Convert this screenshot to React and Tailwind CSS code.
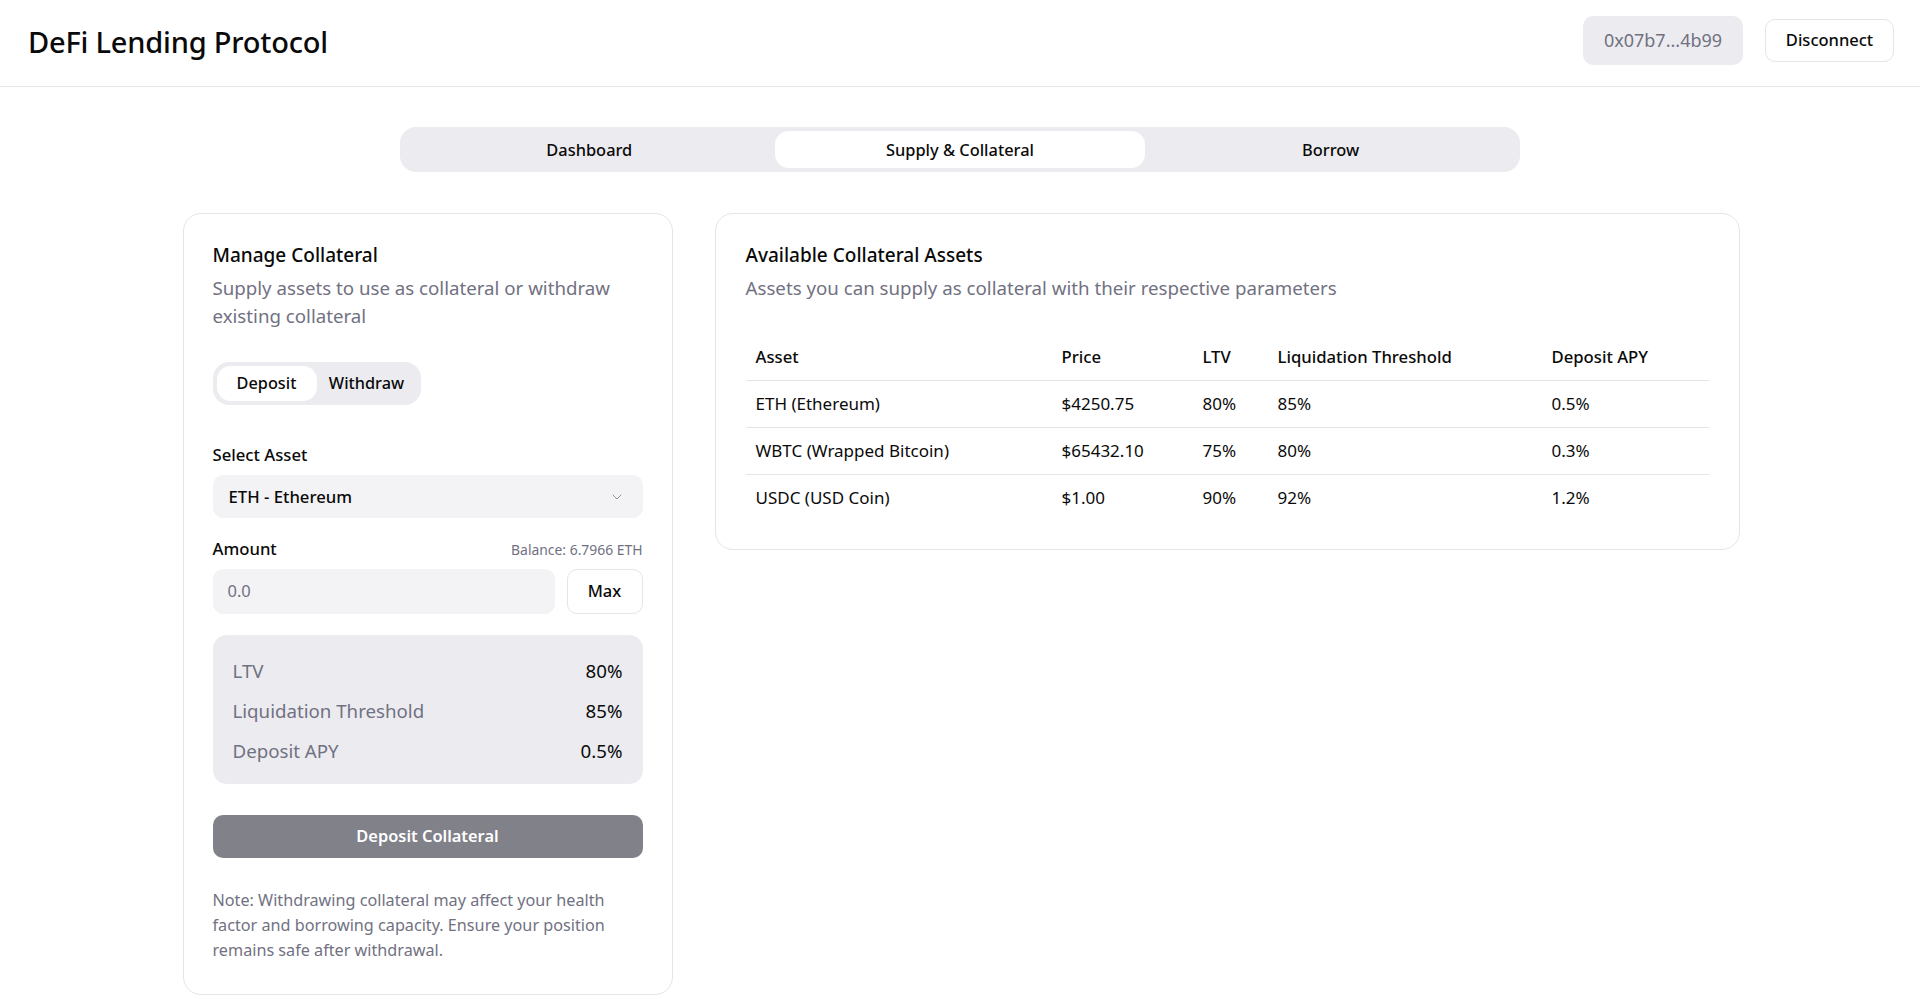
import { ChevronDown } from 'lucide-react'

const assets = [
  { name: 'ETH (Ethereum)', price: '$4250.75', ltv: '80%', lt: '85%', apy: '0.5%' },
  { name: 'WBTC (Wrapped Bitcoin)', price: '$65432.10', ltv: '75%', lt: '80%', apy: '0.3%' },
  { name: 'USDC (USD Coin)', price: '$1.00', ltv: '90%', lt: '92%', apy: '1.2%' },
]

const stats = [
  ['LTV', '80%'],
  ['Liquidation Threshold', '85%'],
  ['Deposit APY', '0.5%'],
]

export default function App() {
  return (
    <div className="min-h-screen bg-white font-['Noto_Sans',sans-serif] text-[#0a0a0a]">
      <header className="h-[87px] border-b border-[#e5e5e5] flex items-center justify-between pl-[28px] pr-[26px] pb-[3px]">
        <h1 className="text-[29px] font-medium tracking-[-0.2px]">DeFi Lending Protocol</h1>
        <div className="flex items-center gap-[22px] mb-[2px]">
          <div className="h-[49px] w-[160px] rounded-[10px] bg-[#ececf0] flex items-center justify-center text-[18px] text-[#717182]">0x07b7...4b99</div>
          <button className="h-[43px] w-[129px] rounded-[10px] border border-[#e5e5e5] bg-white text-[16.5px] font-medium">Disconnect</button>
        </div>
      </header>

      <main className="pt-[40px]">
        <nav className="mx-auto w-[1120px] h-[45px] rounded-[16px] bg-[#ececf0] p-[4px] grid grid-cols-3">
          <button className="rounded-[14px] text-[16.4px] font-medium pt-[1px]">Dashboard</button>
          <button className="rounded-[14px] bg-white text-[16.4px] font-medium pt-[1px]">Supply &amp; Collateral</button>
          <button className="rounded-[14px] text-[16.4px] font-medium pt-[1px]">Borrow</button>
        </nav>

        <div className="mx-auto w-[1559px] pl-[2px] mt-[41px] grid grid-cols-[490px_1fr] gap-[42px] items-start">
          <section className="rounded-[18px] border border-[#e5e5e5] bg-white px-[29px] pt-[27px] pb-[31px]">
            <h2 className="text-[19px] font-medium leading-[28px]">Manage Collateral</h2>
            <p className="text-[18.7px] leading-[28px] text-[#717182] mt-[5px]">Supply assets to use as collateral or withdraw existing collateral</p>

            <div className="mt-[32px] grid grid-cols-2 w-[208px] h-[43px] rounded-[16px] bg-[#ececf0] p-[4px]">
              <button className="rounded-[14px] bg-white text-[16.3px] font-medium">Deposit</button>
              <button className="rounded-[14px] text-[16.3px] font-medium">Withdraw</button>
            </div>

            <div className="mt-[38px]">
              <label className="block text-[16.7px] font-medium leading-[24px]">Select Asset</label>
              <div className="mt-[8px] h-[43px] rounded-[10px] bg-[#f3f3f5] flex items-center justify-between pl-[16px] pr-[18px]">
                <span className="text-[16.7px] font-medium">ETH - Ethereum</span>
                <ChevronDown className="w-[16px] h-[16px] text-[#0a0a0a] opacity-40" strokeWidth={1.5} />
              </div>
            </div>

            <div className="mt-[19px]">
              <div className="flex items-end justify-between">
                <label className="text-[16.7px] font-medium leading-[24px]">Amount</label>
                <span className="text-[13.9px] text-[#717182] leading-[22px]">Balance: 6.7966 ETH</span>
              </div>
              <div className="mt-[8px] flex gap-[12px]">
                <div className="h-[45px] flex-1 rounded-[10px] bg-[#f3f3f5] flex items-center pl-[15px] text-[16.5px] text-[#717182]">0.0</div>
                <button className="h-[45px] w-[76px] rounded-[10px] border border-[#e5e5e5] bg-white text-[16.5px] font-medium">Max</button>
              </div>
            </div>

            <div className="mt-[21px] rounded-[14px] bg-[#ececf0] px-[20px] pt-[22px] pb-[19px] flex flex-col gap-[12px]">
              {stats.map(([label, value]) => (
                <div key={label} className="flex justify-between text-[18.7px] leading-[28px]">
                  <span className="text-[#717182]">{label}</span>
                  <span>{value}</span>
                </div>
              ))}
            </div>

            <button className="mt-[31px] w-full h-[43px] rounded-[10px] bg-[#81818a] text-white text-[16.4px] font-semibold">Deposit Collateral</button>

            <p className="mt-[30px] text-[16.2px] leading-[25px] text-[#717182]">Note: Withdrawing collateral may affect your health factor and borrowing capacity. Ensure your position remains safe after withdrawal.</p>
          </section>

          <section className="rounded-[18px] border border-[#e5e5e5] bg-white px-[30px] pt-[27px] pb-[29px]">
            <h2 className="text-[19px] font-medium leading-[28px]">Available Collateral Assets</h2>
            <p className="text-[18.7px] leading-[28px] text-[#717182] mt-[5px]">Assets you can supply as collateral with their respective parameters</p>

            <table className="mt-[32px] w-full text-[17px] border-collapse">
              <thead>
                <tr className="h-[46px] border-b border-[#e5e5e5]">
                  <th className="w-[306px] text-left font-medium pl-[10px] text-[16.7px]">Asset</th>
                  <th className="w-[141px] text-left font-medium pl-[10px] text-[16.7px]">Price</th>
                  <th className="w-[75px] text-left font-medium pl-[10px] text-[16.7px]">LTV</th>
                  <th className="w-[274px] text-left font-medium pl-[10px] text-[16.7px]">Liquidation Threshold</th>
                  <th className="text-left font-medium pl-[10px] text-[16.7px]">Deposit APY</th>
                </tr>
              </thead>
              <tbody>
                {assets.map((a, i) => (
                  <tr key={a.name} className={i < assets.length - 1 ? 'h-[47px] border-b border-[#e5e5e5]' : 'h-[46px]'}>
                    <td className="pl-[10px]">{a.name}</td>
                    <td className="pl-[10px]">{a.price}</td>
                    <td className="pl-[10px]">{a.ltv}</td>
                    <td className="pl-[10px]">{a.lt}</td>
                    <td className="pl-[10px]">{a.apy}</td>
                  </tr>
                ))}
              </tbody>
            </table>
          </section>
        </div>
      </main>
    </div>
  )
}
